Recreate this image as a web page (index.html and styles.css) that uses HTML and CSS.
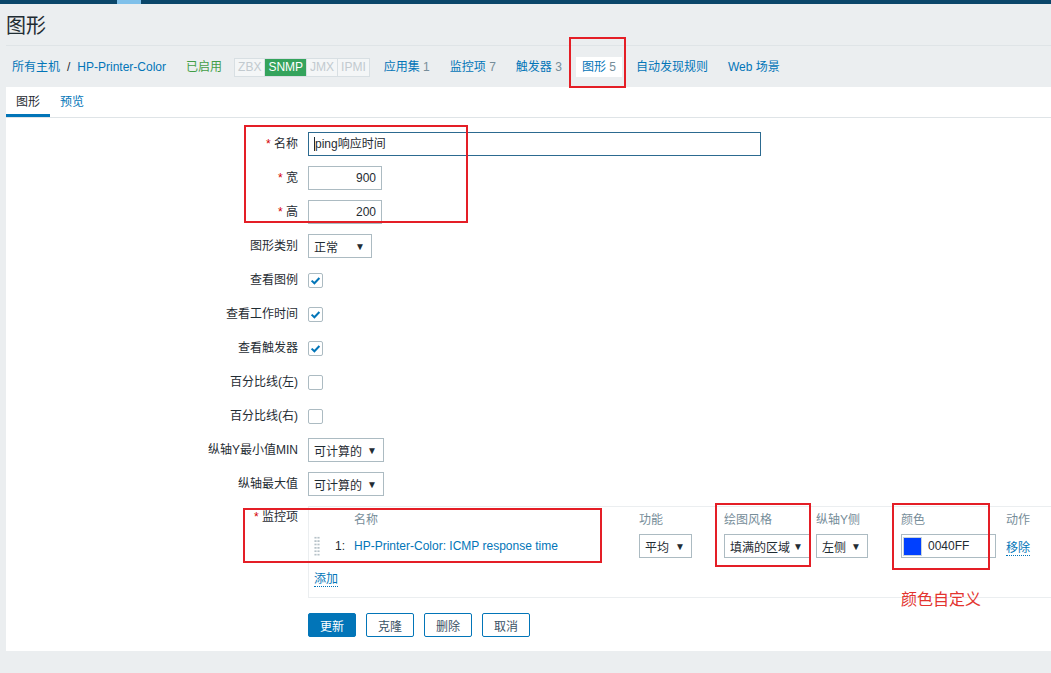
FILE: index.html
```html
<!DOCTYPE html>
<html>

<head>
  <meta charset="UTF-8">
  <title>图形</title>
  <link rel="stylesheet" href="styles.css">
</head>

<body>
  <div class="top-stripe"><span class="stripe-active"></span></div>

  <header class="page-header">
    <h1>图形</h1>
  </header>

  <ul class="host-nav">
    <li class="crumbs"><a href="#">所有主机</a><span class="sep">/</span><a href="#">HP-Printer-Color</a></li>
    <li><span class="green">已启用</span></li>
    <li class="status-li">
      <span class="status-box">
        <span class="st">ZBX</span><span class="st on">SNMP</span><span class="st">JMX</span><span class="st last">IPMI</span>
      </span>
    </li>
    <li><a href="#">应用集</a> <sup class="cnt">1</sup></li>
    <li><a href="#">监控项</a> <sup class="cnt">7</sup></li>
    <li><a href="#">触发器</a> <sup class="cnt">3</sup></li>
    <li class="selected"><a href="#">图形</a> <sup class="cnt">5</sup></li>
    <li><a href="#">自动发现规则</a></li>
    <li><a href="#">Web 场景</a></li>
  </ul>

  <div class="panel">
    <ul class="tabs">
      <li class="tab active">图形</li>
      <li class="tab"><a href="#">预览</a></li>
    </ul>

    <ul class="form-list">
      <li>
        <label class="lbl"><span class="req">*</span> 名称</label>
        <div class="field"><div class="input name-input focused"><span class="caret"></span>ping响应时间</div></div>
      </li>
      <li>
        <label class="lbl"><span class="req">*</span> 宽</label>
        <div class="field"><div class="input num">900</div></div>
      </li>
      <li>
        <label class="lbl"><span class="req">*</span> 高</label>
        <div class="field"><div class="input num">200</div></div>
      </li>
      <li>
        <label class="lbl">图形类别</label>
        <div class="field"><div class="select w62"><span>正常</span><span class="arrow">▼</span></div></div>
      </li>
      <li>
        <label class="lbl">查看图例</label>
        <div class="field"><span class="checkbox"><svg width="15" height="15" viewBox="0 0 15 15"><path d="M3.6 7.6 L6.4 10.3 L11.4 5" fill="none" stroke="#0275b8" stroke-width="2"/></svg></span></div>
      </li>
      <li>
        <label class="lbl">查看工作时间</label>
        <div class="field"><span class="checkbox"><svg width="15" height="15" viewBox="0 0 15 15"><path d="M3.6 7.6 L6.4 10.3 L11.4 5" fill="none" stroke="#0275b8" stroke-width="2"/></svg></span></div>
      </li>
      <li>
        <label class="lbl">查看触发器</label>
        <div class="field"><span class="checkbox"><svg width="15" height="15" viewBox="0 0 15 15"><path d="M3.6 7.6 L6.4 10.3 L11.4 5" fill="none" stroke="#0275b8" stroke-width="2"/></svg></span></div>
      </li>
      <li>
        <label class="lbl">百分比线(左)</label>
        <div class="field"><span class="checkbox"></span></div>
      </li>
      <li>
        <label class="lbl">百分比线(右)</label>
        <div class="field"><span class="checkbox"></span></div>
      </li>
      <li>
        <label class="lbl">纵轴Y最小值MIN</label>
        <div class="field"><div class="select w74"><span>可计算的</span><span class="arrow">▼</span></div></div>
      </li>
      <li>
        <label class="lbl">纵轴最大值</label>
        <div class="field"><div class="select w74"><span>可计算的</span><span class="arrow">▼</span></div></div>
      </li>
      <li class="items-li">
        <label class="lbl lbl-top"><span class="req">*</span> 监控项</label>
        <div class="field">
          <div class="items-box">
            <div class="items-grid head">
              <span></span><span></span>
              <span>名称</span>
              <span>功能</span>
              <span>绘图风格</span>
              <span>纵轴Y侧</span>
              <span>颜色</span>
              <span>动作</span>
            </div>
            <div class="items-grid row">
              <span class="drag"></span>
              <span class="num-cell">1:</span>
              <span><a href="#">HP-Printer-Color: ICMP response time</a></span>
              <span><div class="select w51"><span>平均</span><span class="arrow">▼</span></div></span>
              <span><div class="select w84"><span>填满的区域</span><span class="arrow">▼</span></div></span>
              <span><div class="select w50"><span>左侧</span><span class="arrow">▼</span></div></span>
              <span><div class="color-input"><span class="swatch"></span>0040FF</div></span>
              <span><a href="#" class="dotted">移除</a></span>
            </div>
            <div class="add-row"><a href="#" class="dotted">添加</a></div>
          </div>
        </div>
      </li>
      <li class="buttons-li">
        <span></span>
        <div class="field buttons">
          <button class="btn primary">更新</button>
          <button class="btn">克隆</button>
          <button class="btn">删除</button>
          <button class="btn">取消</button>
        </div>
      </li>
    </ul>
  </div>

  <!-- red annotation marks drawn over the screenshot -->
  <div class="mark" style="left:244px;top:125px;width:224px;height:98px"></div>
  <div class="mark" style="left:569px;top:37px;width:57px;height:51px"></div>
  <div class="mark" style="left:243px;top:508px;width:359px;height:55px"></div>
  <div class="mark" style="left:715px;top:503px;width:96px;height:64px"></div>
  <div class="mark" style="left:892px;top:503px;width:98px;height:67px"></div>
  <div class="mark-note">颜色自定义</div>
</body>

</html>
```

FILE: styles.css
```css
body {
  margin: 0;
  background: #ebeef0;
  font-family: "Liberation Sans", Arial, "Noto Sans CJK SC", sans-serif;
  font-size: 12px;
  color: #1f2c33;
  position: relative;
  min-height: 673px;
  overflow: hidden;
}

a {
  color: #0275b8;
  text-decoration: none;
}

ul {
  list-style: none;
  margin: 0;
  padding: 0;
}

.top-stripe {
  height: 4px;
  background: #0a466a;
  position: relative;
}

.stripe-active {
  position: absolute;
  left: 117px;
  top: 0;
  width: 24px;
  height: 4px;
  background: #7fc0ea;
}

.page-header {
  margin-left: 6px;
  height: 41px;
  border-bottom: 1px solid #dfe4e7;
}

.page-header h1 {
  margin: 0;
  padding-top: 10px;
  font-size: 20px;
  line-height: 24px;
  font-weight: normal;
  color: #1f2c33;
}

.host-nav {
  display: flex;
  align-items: center;
  gap: 8px;
  margin-left: 6px;
  padding: 11px 0 10px;
  height: 20px;
}

.host-nav li {
  padding: 0 6px;
  line-height: 20px;
  white-space: nowrap;
}

.host-nav .sep {
  margin: 0 7px;
  color: #1f2c33;
}

.host-nav .green {
  color: #429e47;
}

.host-nav .status-li {
  padding: 0;
  margin-left: -2px;
}

.status-box {
  display: inline-flex;
  border: 1px solid #d8dfe3;
  background: #f4f6f7;
  height: 17px;
  line-height: 17px;
  vertical-align: middle;
}

.st {
  padding: 0 3px;
  color: #c2cacf;
  border-right: 1px solid #d8dfe3;
}

.st.last {
  border-right: none;
}

.st.on {
  background: #34a35c;
  color: #fff;
}

.cnt {
  color: #768d99;
  vertical-align: baseline;
  font-size: 12px;
}

.host-nav .selected {
  background: #fff;
}

.panel {
  margin-left: 6px;
  background: #fff;
  padding-bottom: 14px;
}

.tabs {
  display: flex;
  border-bottom: 1px solid #dfe4e7;
  height: 30px;
}

.tab {
  padding: 7px 10px 0;
  line-height: 16px;
  border-bottom: 3px solid transparent;
}

.tab.active {
  border-bottom-color: #0275b8;
  color: #1f2c33;
}

.form-list {
  padding-top: 14px;
}

.form-list > li {
  display: grid;
  grid-template-columns: 292px 1fr;
  column-gap: 10px;
  align-items: center;
  margin-bottom: 10px;
  min-height: 24px;
}

.form-list > li.buttons-li {
  margin-bottom: 0;
}

.lbl {
  text-align: right;
  line-height: 24px;
}

.lbl-top {
  align-self: start;
  line-height: 18px;
}

.req {
  color: #d40000;
}

.input {
  height: 22px;
  line-height: 22px;
  border: 1px solid #acbbc2;
  padding: 0 5px;
  background: #fff;
  color: #1f2c33;
}

.name-input {
  width: 441px;
  display: flex;
  align-items: center;
}

.name-input.focused {
  border-color: #2c6a90;
}

.caret {
  display: inline-block;
  width: 1px;
  height: 14px;
  background: #1f2c33;
}

.input.num {
  width: 62px;
  text-align: right;
}

.select {
  height: 22px;
  border: 1px solid #acbbc2;
  background: #fff;
  display: flex;
  align-items: center;
  justify-content: space-between;
  padding: 0 6px 0 5px;
  box-sizing: content-box;
}

.select .arrow {
  font-size: 10px;
  color: #1f2c33;
}

.w62 { width: 51px; }
.w74 { width: 63px; }
.w51 { width: 40px; }
.w84 { width: 73px; }
.w50 { width: 39px; }

.checkbox {
  display: block;
  width: 15px;
  height: 15px;
  border: 1px solid #acbbc2;
  border-radius: 2px;
  box-sizing: border-box;
  position: relative;
}

.checkbox svg {
  position: absolute;
  left: -1px;
  top: -1px;
}

.items-li {
  align-items: start;
}

.form-list > li.items-li {
  margin-bottom: 15px;
}

.items-li .lbl-top {
  padding-top: 2px;
}

.items-box {
  border: 1px solid #ebeef0;
  border-right: none;
  padding-left: 5px;
}

.items-grid {
  display: grid;
  grid-template-columns: 21px 19px 285px 85px 92px 85px 105px auto;
  align-items: center;
}

.items-grid.head {
  height: 22px;
  color: #768d99;
}

.items-grid.row {
  padding: 5px 0 3px;
  height: 24px;
}

.num-cell {
  color: #1f2c33;
}

.drag {
  display: block;
  width: 6px;
  height: 20px;
  background-image: radial-gradient(circle, #b7c2c8 1px, transparent 1.2px);
  background-size: 3px 3.4px;
}

.color-input {
  width: 93px;
  height: 22px;
  border: 1px solid #acbbc2;
  display: flex;
  align-items: center;
  gap: 6px;
  color: #1f2c33;
}

.swatch {
  width: 19px;
  height: 19px;
  margin-left: 1px;
  background: #0040ff;
  border: 1px solid #c9d4da;
  box-sizing: border-box;
}

.dotted {
  border-bottom: 1px dotted #0275b8;
}

.add-row {
  margin-top: 10px;
  line-height: 16px;
  padding-bottom: 10px;
}

.buttons {
  display: flex;
  gap: 10px;
}

.btn {
  font-family: inherit;
  font-size: 12px;
  height: 24px;
  padding: 0 11px;
  border: 1px solid #0275b8;
  border-radius: 2px;
  background: #fff;
  color: #3b5266;
  cursor: pointer;
}

.btn.primary {
  background: #0275b8;
  color: #fff;
}

.mark {
  position: absolute;
  border: 2px solid #e41e26;
  box-sizing: border-box;
}

.mark-note {
  position: absolute;
  left: 901px;
  top: 586px;
  font-size: 16px;
  color: #e3342f;
}
```
